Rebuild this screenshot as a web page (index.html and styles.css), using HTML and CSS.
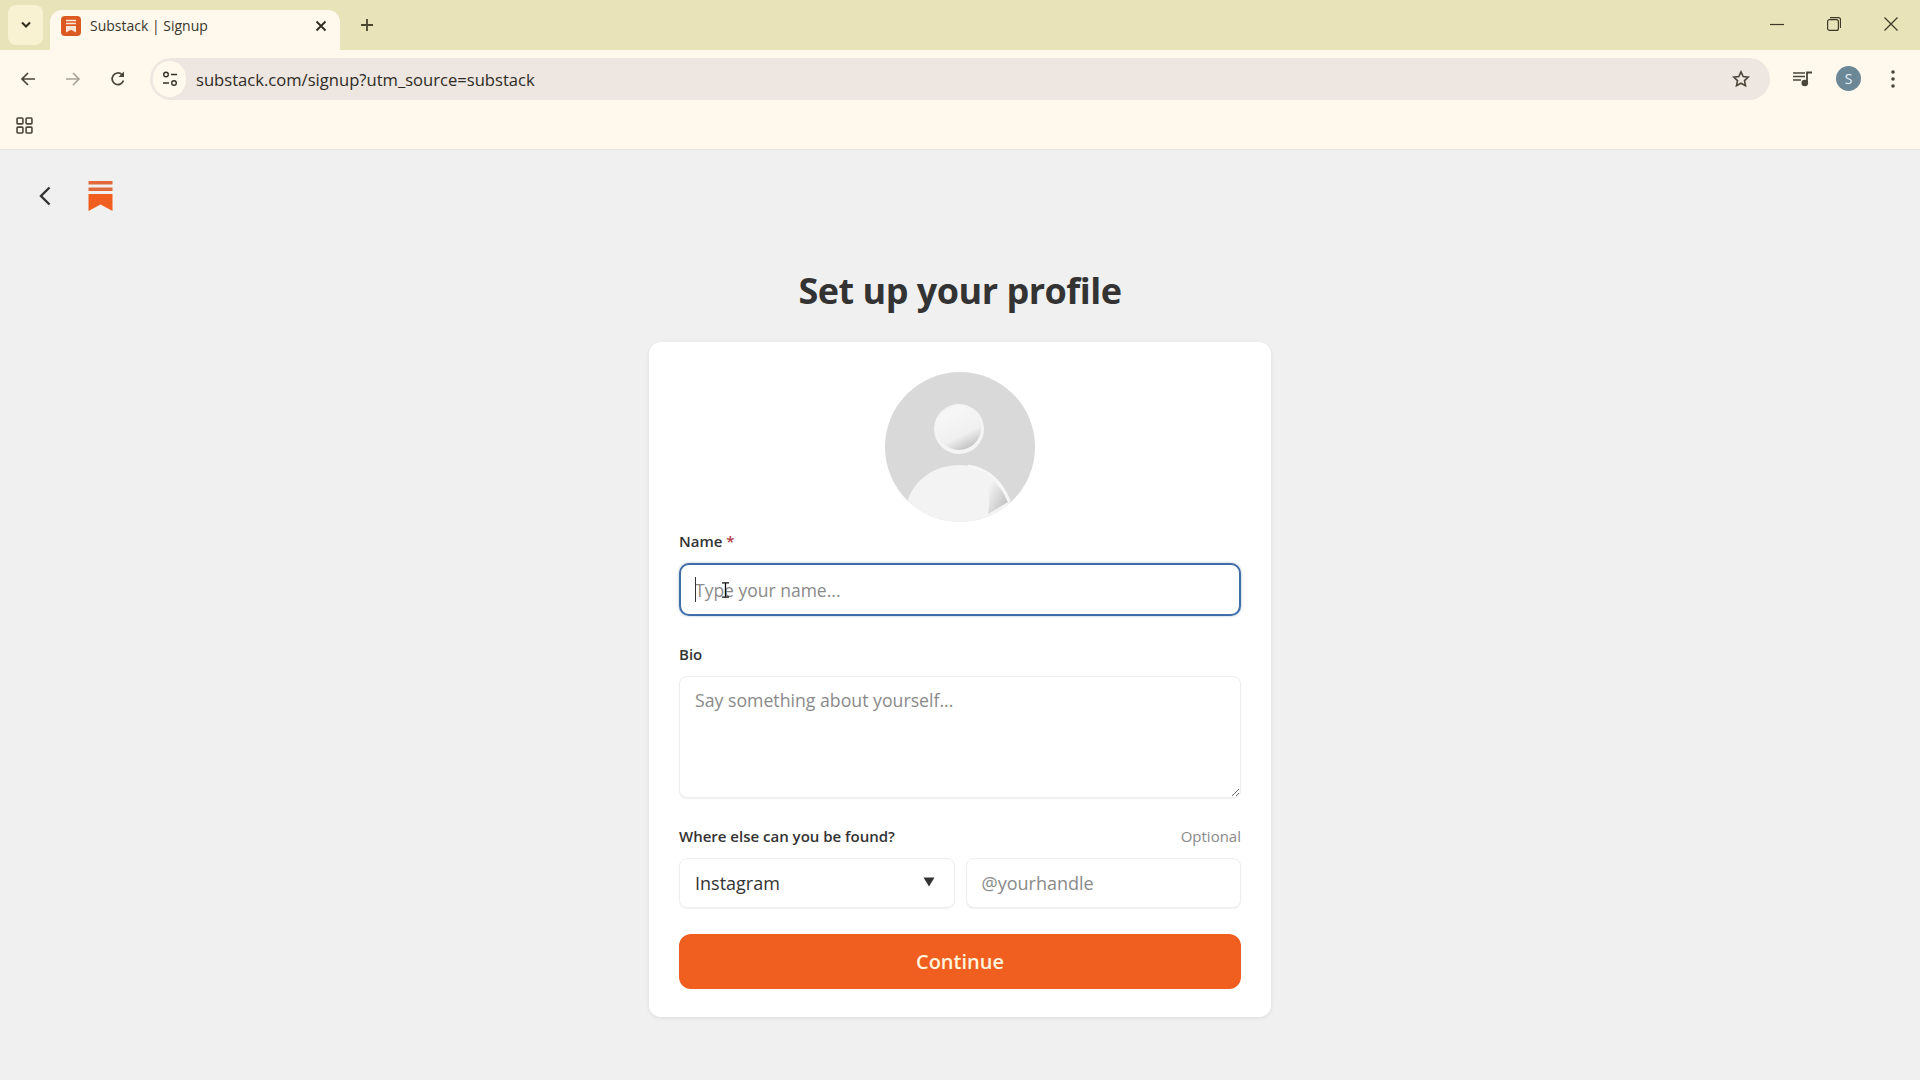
FILE: index.html
```html
<!DOCTYPE html>
<html lang="en">
<head>
    <meta charset="UTF-8">
    <meta name="viewport" content="width=device-width, initial-scale=1.0">
    <title>Substack | Signup</title>
    <link rel="stylesheet" href="styles.css">
</head>
<body>
    <div class="tab-strip">
        <div class="tab-search">
            <svg width="12" height="8" viewBox="0 0 12 8"><path d="M2 1.500l4 4 4-4" fill="none" stroke="#2f2b1c" stroke-width="2"/></svg>
        </div>
        <div class="tab">
            <svg class="tab-icon" width="20" height="20" viewBox="0 0 20 20">
                <rect width="20" height="20" rx="4" fill="#dc5a22"/>
                <path d="M5 4.500h10M5 7.500h10" stroke="#fbe6d6" stroke-width="1.400"/>
                <path d="M5 10h10v6.500l-5-2.800-5 2.800z" fill="#fbe6d6"/>
            </svg>
            <span class="tab-title">Substack | Signup</span>
            <svg class="tab-close" width="12" height="12" viewBox="0 0 12 12"><path d="M1.500 1.500l9 9M10.500 1.500l-9 9" stroke="#2f2b1c" stroke-width="1.800"/></svg>
        </div>
        <svg class="new-tab" width="14" height="14" viewBox="0 0 14 14"><path d="M7 1v12M1 7h12" stroke="#4a4630" stroke-width="1.800"/></svg>
        <div class="window-controls">
            <svg width="14" height="14" viewBox="0 0 14 14"><path d="M0 7.500h14" stroke="#3c3826" stroke-width="1.200"/></svg>
            <svg width="14" height="14" viewBox="0 0 14 14"><rect x="0.600" y="2.600" width="10.800" height="10.800" rx="2" fill="none" stroke="#3c3826" stroke-width="1.200"/><path d="M3 0.600h8.500a2 2 0 0 1 2 2V11" fill="none" stroke="#3c3826" stroke-width="1.200"/></svg>
            <svg width="14" height="14" viewBox="0 0 14 14"><path d="M0.500 0.500l13 13M13.500 0.500l-13 13" stroke="#3c3826" stroke-width="1.200"/></svg>
        </div>
    </div>

    <div class="toolbar">
        <div class="nav-buttons">
            <svg width="16" height="16" viewBox="0 0 16 16"><path d="M15 8H2M8 2L2 8l6 6" fill="none" stroke="#4a463a" stroke-width="1.700"/></svg>
            <svg width="16" height="16" viewBox="0 0 16 16"><path d="M1 8h13M8 2l6 6-6 6" fill="none" stroke="#a8a498" stroke-width="1.700"/></svg>
            <svg width="16" height="16" viewBox="0 0 16 16"><path d="M13.500 9.500A5.800 5.800 0 1 1 12 3.600" fill="none" stroke="#4a463a" stroke-width="1.700"/><path d="M14 0.500v5.500H8.500z" fill="#4a463a"/></svg>
        </div>
        <div class="address-bar">
            <div class="site-info">
                <svg width="16" height="16" viewBox="0 0 16 16">
                    <circle cx="4" cy="3.500" r="2.300" fill="none" stroke="#35322a" stroke-width="1.400"/>
                    <path d="M9 3.500h6M1 12h6" stroke="#35322a" stroke-width="1.600"/>
                    <circle cx="12" cy="12" r="2.300" fill="none" stroke="#35322a" stroke-width="1.400"/>
                </svg>
            </div>
            <span class="url">substack.com/signup?utm_source=substack</span>
            <svg class="star" width="18" height="18" viewBox="0 0 18 18"><path d="M9 1.800l2.200 4.700 5.100.6-3.800 3.500 1 5.100L9 13.200l-4.500 2.500 1-5.100-3.800-3.500 5.100-.6z" fill="none" stroke="#4a463a" stroke-width="1.600"/></svg>
        </div>
        <div class="toolbar-actions">
            <svg class="media-icon" width="20" height="16" viewBox="0 0 20 16">
                <path d="M0 2h12M0 5.500h12M0 9h8" stroke="#4a463a" stroke-width="1.600"/>
                <path d="M14 11V1.500h5" fill="none" stroke="#4a463a" stroke-width="1.800"/>
                <circle cx="11.800" cy="12" r="3.300" fill="#4a463a"/>
            </svg>
            <div class="profile-badge">S</div>
            <svg width="4" height="18" viewBox="0 0 4 18"><circle cx="2" cy="2" r="1.800" fill="#4a463a"/><circle cx="2" cy="9" r="1.800" fill="#4a463a"/><circle cx="2" cy="16" r="1.800" fill="#4a463a"/></svg>
        </div>
    </div>

    <div class="bookmarks">
        <svg width="17" height="17" viewBox="0 0 16 16">
            <rect x="1" y="1" width="5.500" height="5.500" rx="0.800" fill="none" stroke="#4a463a" stroke-width="1.500"/>
            <rect x="9.500" y="1" width="5.500" height="5.500" rx="0.800" fill="none" stroke="#4a463a" stroke-width="1.500"/>
            <rect x="1" y="9.500" width="5.500" height="5.500" rx="0.800" fill="none" stroke="#4a463a" stroke-width="1.500"/>
            <rect x="9.500" y="9.500" width="5.500" height="5.500" rx="0.800" fill="none" stroke="#4a463a" stroke-width="1.500"/>
        </svg>
    </div>

    <main class="page">
        <div class="page-nav">
            <svg class="back" width="12" height="20" viewBox="0 0 12 20"><path d="M10.500 1.500L2 10l8.500 8.500" fill="none" stroke="#333" stroke-width="2.400"/></svg>
            <svg width="25" height="30" viewBox="0 0 24 30">
                <rect width="24" height="3.500" fill="#e2693a"/>
                <rect y="6.500" width="24" height="3.500" fill="#e2693a"/>
                <path d="M0 13h24v17L12 23.500 0 30z" fill="#f05f1f"/>
            </svg>
        </div>

        <h1 class="page-title">Set up your profile</h1>

        <form class="card">
            <svg class="avatar" width="152" height="152" viewBox="0 0 152 152">
                <defs>
                    <clipPath id="avatarClip"><circle cx="76" cy="76" r="75"/></clipPath>
                    <linearGradient id="headShade" x1="0.300" y1="0.200" x2="0.700" y2="1">
                        <stop offset="0" stop-color="#f6f6f6"/>
                        <stop offset="0.600" stop-color="#f0f0f0"/>
                        <stop offset="0.950" stop-color="#c4c4c4"/>
                    </linearGradient>
                    <linearGradient id="bodyShade" x1="0.100" y1="0.100" x2="0.900" y2="0.800">
                        <stop offset="0.150" stop-color="#f3f3f3"/>
                        <stop offset="1" stop-color="#c2c2c2"/>
                    </linearGradient>
                </defs>
                <g clip-path="url(#avatarClip)">
                    <rect width="152" height="152" fill="#d9d9d9"/>
                    <circle cx="75" cy="58" r="25" fill="#f4f4f4"/>
                    <circle cx="75" cy="57" r="22" fill="url(#headShade)"/>
                    <path d="M20 152C20 116 44 94 76 94c26 0 42 14 50 36l-4 22z" fill="#f3f3f3"/>
                    <path d="M102 104c10 7 17 15 22 27l-20 12c2-13 2-26-2-39z" fill="url(#bodyShade)"/>
                    <path d="M84 95c20 3 33 15 41 35" fill="none" stroke="#f6f6f6" stroke-width="3"/>
                </g>
            </svg>

            <label class="field-label name-label" for="name">Name <span class="required">*</span></label>
            <div class="name-wrap">
                <input class="text-input name-input" id="name" type="text" placeholder="Type your name...">
                <span class="caret"></span>
                <svg class="ibeam" width="9" height="16" viewBox="0 0 9 16"><path d="M1 .8h7M1 15.200h7M4.500 .8v14.400" fill="none" stroke="#111" stroke-width="1.300"/></svg>
            </div>

            <label class="field-label bio-label" for="bio">Bio</label>
            <textarea class="text-input bio-input" id="bio" placeholder="Say something about yourself..."></textarea>

            <div class="label-row">
                <span class="field-label">Where else can you be found?</span>
                <span class="optional">Optional</span>
            </div>
            <div class="social-row">
                <div class="select-wrap">
                    <span>Instagram</span>
                    <svg class="select-arrow" width="12" height="10" viewBox="0 0 12 10"><path d="M0.500 0.500h11L6 9.500z" fill="#333"/></svg>
                </div>
                <input class="text-input handle-input" type="text" placeholder="@yourhandle">
            </div>

            <button class="continue" type="button">Continue</button>
        </form>
    </main>
</body>
</html>
```

FILE: styles.css
```css
* {
    box-sizing: border-box;
    font-family: 'Open Sans', sans-serif;
}

html, body {
    height: 100%;
}

body {
    margin: 0;
    background: #f0f0f0;
    color: #333;
    overflow: hidden;
}

/* browser chrome */
.tab-strip {
    height: 50px;
    background: #e9e3b9;
    display: flex;
    align-items: flex-end;
    padding-left: 8px;
}

.tab-search {
    width: 35px;
    height: 40px;
    margin-bottom: 5px;
    background: #f8f2d2;
    border-radius: 8px;
    display: flex;
    align-items: center;
    justify-content: center;
}

.tab {
    width: 290px;
    height: 40px;
    margin-left: 7px;
    padding: 0 13px 0 11px;
    background: #fef8ed;
    border-radius: 12px 12px 0 0;
    display: flex;
    align-items: center;
    gap: 9px;
}

.tab-title {
    font-size: 14px;
    padding-bottom: 10px;
    color: #3a362a;
    flex: 1;
}

.tab-icon, .tab-close {
    margin-bottom: 8px;
}

.new-tab {
    margin: 0 0 18px 20px;
}

.window-controls {
    margin-left: auto;
    align-self: stretch;
    display: flex;
    align-items: center;
    gap: 43px;
    padding: 0 22px 2px 0;
}

.toolbar {
    height: 53px;
    background: #fef8ed;
    display: flex;
    align-items: center;
    padding: 4px 0 0 20px;
}

.nav-buttons {
    display: flex;
    gap: 29px;
    width: 130px;
    flex-shrink: 0;
}

.address-bar {
    width: 1620px;
    height: 42px;
    background: #ede6e1;
    border-radius: 21px;
    display: flex;
    align-items: center;
    padding: 0 20px 0 3px;
}

.site-info {
    width: 33px;
    height: 36px;
    background: #fef8ed;
    border-radius: 18px;
    display: flex;
    align-items: center;
    justify-content: center;
}

.url {
    margin-left: 10px;
    padding-top: 1px;
    font-size: 16.600px;
    color: #2f2c25;
    flex: 1;
}

.toolbar-actions {
    display: flex;
    align-items: center;
    gap: 30px;
    padding-left: 23px;
}

.media-icon {
    margin-right: -7px;
}

.profile-badge {
    width: 25px;
    height: 25px;
    border-radius: 50%;
    background: #6c8796;
    color: #e4f1f6;
    font-size: 14px;
    display: flex;
    align-items: center;
    justify-content: center;
}

.bookmarks {
    height: 47px;
    background: #fef8ed;
    border-bottom: 1px solid #e8e4da;
    display: flex;
    align-items: center;
    padding: 0 0 1px 16px;
}

/* signup page */
.page {
    display: flex;
    flex-direction: column;
    align-items: center;
}

.page-nav {
    align-self: stretch;
    display: flex;
    align-items: center;
    gap: 37px;
    padding: 31px 0 0 39px;
}

.page-title {
    margin: 54px 0 25px;
    font-size: 36px;
    line-height: 52px;
    font-weight: 700;
    letter-spacing: -0.500px;
    color: #333;
}

.card {
    width: 622px;
    height: 675px;
    padding: 29px 30px 0;
    background: #fff;
    border-radius: 12px;
    box-shadow: 0 1px 4px rgba(0, 0, 0, 0.08);
    display: flex;
    flex-direction: column;
}

.avatar {
    align-self: center;
    flex-shrink: 0;
}

.field-label {
    font-size: 15px;
    line-height: 20px;
    font-weight: 600;
    color: #333;
}

.name-label {
    margin-top: 8px;
}

.required {
    color: #b5384a;
}

.name-wrap {
    position: relative;
    margin-top: 12px;
}

.text-input {
    width: 100%;
    font-size: 18px;
    color: #333;
    background: #fff;
    border: 1px solid #eee;
    border-radius: 8px;
    box-shadow: 0 1px 1px rgba(0, 0, 0, 0.06);
    padding: 0 15px;
    outline: none;
}

.text-input::placeholder {
    color: #8a8a8a;
    opacity: 1;
}

.name-input {
    display: block;
    height: 53px;
    border: 2px solid #3f6da8;
    padding: 0 14px;
    border-radius: 10px;
    font-size: 17.500px;
    box-shadow: 0 0 3px rgba(63, 109, 168, 0.4);
}

.caret {
    position: absolute;
    left: 16px;
    top: 14px;
    width: 1px;
    height: 25px;
    background: #333;
}

.ibeam {
    position: absolute;
    left: 42px;
    top: 19px;
}

.bio-label {
    margin-top: 28px;
}

.bio-input {
    display: block;
    height: 122px;
    margin-top: 12px;
    padding: 10px 15px;
    font-size: 17.700px;
    line-height: 26px;
    resize: vertical;
}

.label-row {
    margin-top: 28px;
    display: flex;
    justify-content: space-between;
    align-items: center;
}

.optional {
    font-size: 15px;
    color: #8a8a8a;
}

.social-row {
    margin-top: 12px;
    display: grid;
    grid-template-columns: 1fr 1fr;
    gap: 11px;
}

.select-wrap {
    height: 50px;
    padding: 0 19px 0 15px;
    border: 1px solid #eee;
    border-radius: 8px;
    box-shadow: 0 1px 1px rgba(0, 0, 0, 0.06);
    font-size: 18px;
    color: #333;
    display: flex;
    align-items: center;
    justify-content: space-between;
}

.select-arrow {
    margin-bottom: 3px;
}

.handle-input {
    height: 50px;
}

.continue {
    height: 55px;
    margin-top: 26px;
    background: #f05f1f;
    color: #fff3dc;
    border: none;
    border-radius: 12px;
    font-size: 20px;
    font-weight: 600;
    cursor: pointer;
}
```
